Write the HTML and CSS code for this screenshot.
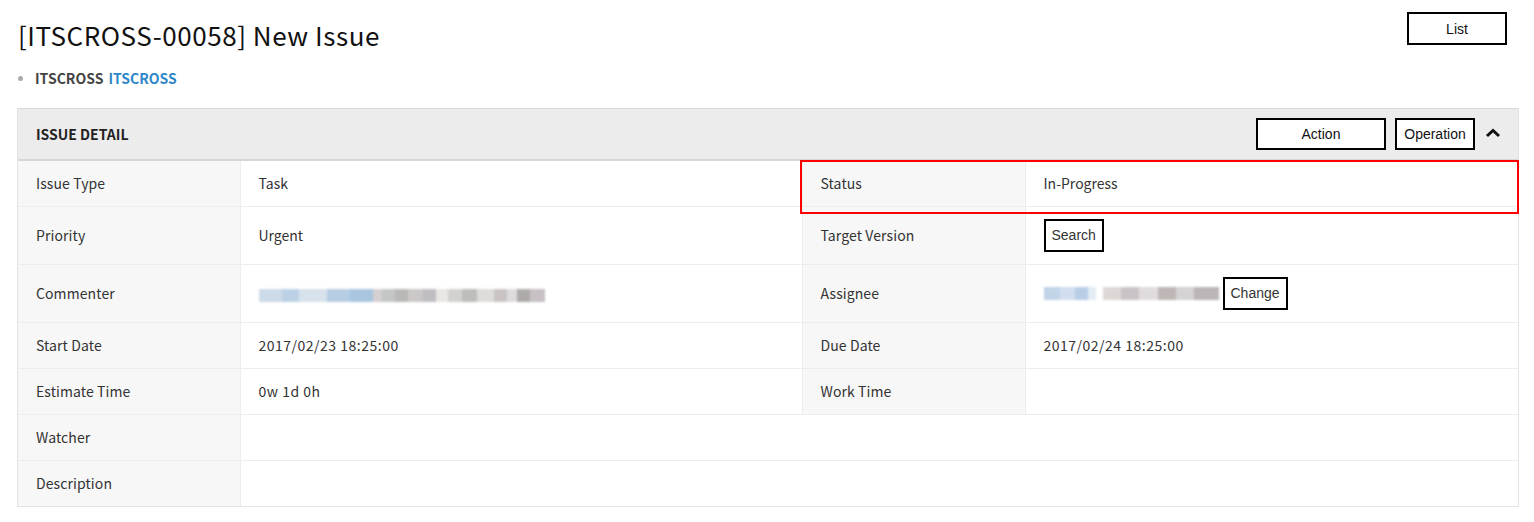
FILE: index.html
```html
<!DOCTYPE html>
<html>
<head>
<meta charset="utf-8">
<link rel="stylesheet" href="styles.css">
</head>
<body>
<div class="page">
  <div class="top">
    <h1 class="title">[ITSCROSS-00058] New Issue</h1>
    <button class="btn btn-list">List</button>
  </div>
  <div class="crumb"><span class="dot"></span><span class="crumb-a">ITSCROSS</span> <span class="crumb-b">ITSCROSS</span></div>

  <div class="panel">
    <div class="panel-head">
      <div class="panel-title">ISSUE DETAIL</div>
      <div class="panel-actions">
        <button class="btn btn-action">Action</button>
        <button class="btn btn-op">Operation</button>
        <svg class="chev" width="16" height="12" viewBox="0 0 16 12"><path d="M2 9 L8 3.5 L14 9" fill="none" stroke="#111" stroke-width="3"/></svg>
      </div>
    </div>
    <table class="detail">
      <colgroup>
        <col class="c1"><col class="c2"><col class="c3"><col class="c4">
      </colgroup>
      <tr>
        <th>Issue Type</th><td>Task</td>
        <th>Status</th><td>In-Progress</td>
      </tr>
      <tr class="tall">
        <th>Priority</th><td>Urgent</td>
        <th>Target Version</th><td><button class="btn btn-small">Search</button></td>
      </tr>
      <tr class="tall">
        <th>Commenter</th>
        <td><span class="mosaic m-long"><i class="b1"></i><i class="b2"></i><i class="b3"></i><i class="b4"></i></span></td>
        <th>Assignee</th>
        <td><span class="mosaic m-short"><i class="b1"></i><i class="b4"></i></span><button class="btn btn-small btn-change">Change</button></td>
      </tr>
      <tr>
        <th>Start Date</th><td class="num">2017/02/23 18:25:00</td>
        <th>Due Date</th><td class="num">2017/02/24 18:25:00</td>
      </tr>
      <tr>
        <th>Estimate Time</th><td class="num">0w 1d 0h</td>
        <th>Work Time</th><td></td>
      </tr>
      <tr>
        <th>Watcher</th><td colspan="3"></td>
      </tr>
      <tr>
        <th>Description</th><td colspan="3"></td>
      </tr>
    </table>
    <div class="highlight"></div>
  </div>
</div>
</body>
</html>
```

FILE: styles.css
```css
* { box-sizing: border-box; }
html, body { margin: 0; padding: 0; background: #fff; }
body {
  font-family: "Noto Sans CJK KR", "Noto Sans", sans-serif;
  color: #333;
}
.page {
  padding: 0 15px 0 17px;
}
.top {
  display: flex;
  justify-content: space-between;
  align-items: flex-start;
}
.title {
  margin: 17px 0 0 1px;
  font-size: 26px;
  font-weight: 400;
  line-height: 36px;
  color: #111;
  letter-spacing: 0.55px;
}
.btn {
  font-family: "Liberation Sans", Arial, sans-serif;
  font-size: 14px;
  color: #111;
  background: #fff;
  border: 2px solid #000;
  padding: 0;
  cursor: pointer;
}
.btn-list {
  margin-top: 12px;
  margin-right: 12px;
  width: 100px;
  height: 33px;
}
.crumb {
  display: flex;
  align-items: center;
  margin-top: 15px;
  height: 20px;
  font-size: 14px;
  font-weight: 700;
}
.dot {
  width: 5px;
  height: 5px;
  border-radius: 50%;
  background: #aaa;
  margin: 0 12px 0 1px;
}
.crumb-a { color: #444; margin-right: 5px; }
.crumb-b { color: #2f86c8; }

.panel {
  position: relative;
  margin-top: 20px;
  border: 1px solid #e3e3e3;
  border-top: 1px solid #d9d9d9;
}
.panel-head {
  display: flex;
  justify-content: space-between;
  align-items: center;
  height: 52px;
  background: #ececec;
  border-bottom: 2px solid #d6d6d6;
  padding: 0 17px 0 18px;
}
.panel-title {
  font-size: 14px;
  font-weight: 700;
  color: #222;
}
.panel-actions {
  display: flex;
  align-items: center;
}
.btn-action { width: 130px; height: 32px; margin-right: 9px; }
.btn-op { width: 80px; height: 32px; margin-right: 10px; }
.chev { display: block; margin-top: -2px; }

.detail {
  width: 100%;
  border-collapse: collapse;
  font-size: 14px;
}
.c1 { width: 222px; }
.c2 { width: 562px; }
.c3 { width: 223px; }
.detail th, .detail td {
  border-top: 1px solid #ededed;
  border-left: 1px solid #ededed;
  height: 46px;
  padding: 0 18px;
  text-align: left;
  font-weight: 400;
  color: #333;
  vertical-align: middle;
}
.detail tr:first-child th, .detail tr:first-child td { border-top: 0; height: 45px; }
.detail th:first-child { border-left: 0; }
.detail th { background: #f7f7f7; letter-spacing: 0.1px; }
.detail td { background: #fff; }
.detail td.num { letter-spacing: 0.5px; }
.detail tr.tall th, .detail tr.tall td { height: 58px; }

.btn-small {
  height: 33px;
  padding: 0 6px;
  font-size: 14px;
  color: #333;
  vertical-align: middle;
}
.btn-change { margin-left: 4px; }

.mosaic {
  display: inline-flex;
  height: 13px;
  vertical-align: middle;
  filter: blur(0.9px);
}
.mosaic i { display: block; height: 100%; }
.m-long { width: 287px; }
.m-short { width: 175px; }
.m-long .b1 { width: 40%; background: linear-gradient(90deg, #cddbe8 0 20%, #bcd1e5 20% 35%, #d8e2ec 35% 60%, #b6cde4 60% 80%, #a9c5e0 80% 100%); }
.m-long .b2 { width: 22%; background: linear-gradient(90deg, #d6cfd2 0 15%, #c4c6c5 15% 35%, #b9b8b6 35% 55%, #ccc8c8 55% 80%, #bfbdc2 80% 100%); }
.m-long .b3 { width: 20%; background: linear-gradient(90deg, #e9e6e3 0 20%, #d3d2d1 20% 45%, #bdbdb9 45% 70%, #dedcdb 70% 100%); }
.m-long .b4 { width: 18%; background: linear-gradient(90deg, #c9c4c3 0 25%, #dedbdc 25% 45%, #aeaaaa 45% 70%, #c7c0c4 70% 100%); }
.m-short .b1 { width: 30%; background: linear-gradient(90deg, #c2d4e8 0 30%, #d2def0 30% 60%, #b8cde6 60% 85%, #e4ecf4 85% 100%); }
.m-short .b4 { width: 70%; background: linear-gradient(90deg, #fff 0 6%, #ddd8d6 6% 20%, #c9c3c8 20% 35%, #e0dcde 35% 50%, #bfb7b6 50% 65%, #d5d3d3 65% 80%, #bcb5b7 80% 100%); }

.highlight {
  position: absolute;
  left: 782px;
  top: 51px;
  width: 719px;
  height: 54px;
  border: 2px solid #ff0000;
  pointer-events: none;
}
```
